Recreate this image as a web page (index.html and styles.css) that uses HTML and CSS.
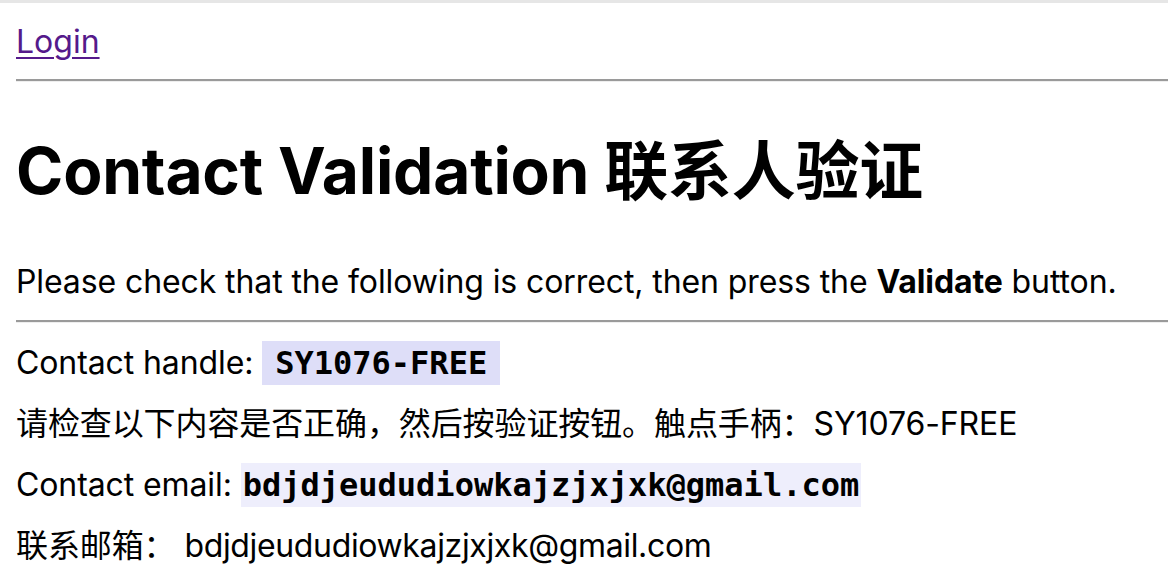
FILE: index.html
```html
<!DOCTYPE html>
<html lang="en">
<head>
<meta charset="utf-8">
<title>Contact Validation</title>
<link rel="stylesheet" href="styles.css">
</head>
<body>
<div class="top-bar"></div>
<div class="page">
  <nav class="nav"><a href="#" class="nav-link">Login</a></nav>
  <hr class="rule rule-nav">
  <h1 class="title">Contact Validation 联系人验证</h1>
  <p class="intro">Please check that the following is correct, then press the <strong>Validate</strong> button.</p>
  <hr class="rule rule-intro">
  <div class="rows">
    <div class="row">Contact handle: <code class="value value-handle">SY1076-FREE</code></div>
    <div class="row">请检查以下内容是否正确，然后按验证按钮。触点手柄：SY1076-FREE</div>
    <div class="row">Contact email: <code class="value value-email">bdjdjeududiowkajzjxjxk@gmail.com</code></div>
    <div class="row">联系邮箱： <span class="plain-email">bdjdjeududiowkajzjxjxk@gmail.com</span></div>
  </div>
</div>
</body>
</html>
```

FILE: styles.css
```css
html, body {
  margin: 0;
  padding: 0;
  background: #ffffff;
}
body {
  font-family: Inter, "Noto Sans CJK SC", sans-serif;
  font-size: 32px;
  color: #000;
  overflow: hidden;
}
.top-bar {
  height: 3px;
  background: #e6e6e6;
}
.page {
  padding-left: 16px;
}
.nav {
  padding-top: 19px;
  line-height: 40px;
}
.nav-link {
  color: #551a8b;
  text-decoration: underline;
  text-decoration-thickness: 2px;
  text-underline-offset: 4px;
}
.rule {
  border: 0;
  height: 0;
  margin: 0;
  border-top: 2px solid #9a9a9a;
  border-bottom: 1px solid #eeeeee;
}
.rule-nav {
  margin-top: 17px;
}
.title {
  margin: 49px 0 0;
  font-size: 64px;
  line-height: 80px;
  font-weight: 700;
  letter-spacing: -0.2px;
}
.intro {
  margin: 51px 0 0;
  line-height: 40px;
  letter-spacing: -0.1px;
}
.rule-intro {
  margin-top: 18px;
}
.rows {
  display: flex;
  flex-direction: column;
  gap: 21px;
  padding-top: 20px;
}
.row {
  line-height: 40px;
  letter-spacing: -0.1px;
}
.plain-email {
  letter-spacing: -0.35px;
}
.value {
  font-family: "DejaVu Sans Mono", monospace;
  font-weight: 700;
  font-size: 32px;
  letter-spacing: 0;
}
.value-handle {
  background: #dedef8;
  padding: 3px 13px;
}
.value-email {
  background: #eeeefc;
  padding: 3px 2px;
}
```
